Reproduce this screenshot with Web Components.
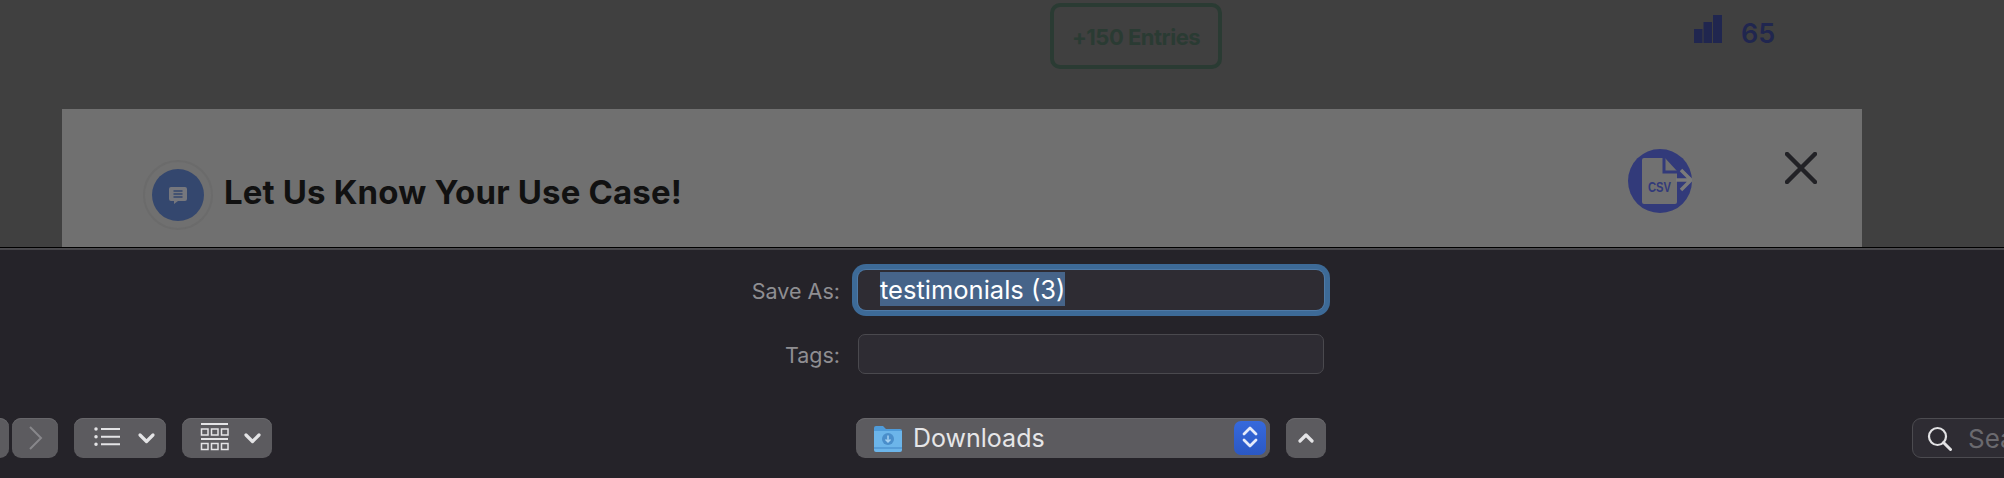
<!DOCTYPE html>
<html>
<head>
<meta charset="utf-8">
<title>Save dialog</title>
<style>
  html, body { margin: 0; padding: 0; height: 478px; overflow: hidden; background: #252329; }
</style>
</head>
<body>
<app-screen>
  <site-backdrop slot="top"></site-backdrop>
  <save-sheet slot="bottom"></save-sheet>
</app-screen>

<script>
const screenTemplate = document.createElement('template');
screenTemplate.innerHTML = `
  <style>
    :host { display: grid; grid-template-rows: 247px 231px; width: 2004px; height: 478px; overflow: hidden; }
  </style>
  <slot name="top"></slot>
  <slot name="bottom"></slot>
`;

class AppScreen extends HTMLElement {
  connectedCallback() {
    this.attachShadow({ mode: 'open' }).appendChild(screenTemplate.content.cloneNode(true));
  }
}

const backdropTemplate = document.createElement('template');
backdropTemplate.innerHTML = `
  <style>
    :host { display: block; background: #404040; overflow: hidden; font-family: Inter, "Liberation Sans", sans-serif; }
    .stats { display: flex; height: 109px; box-sizing: border-box; padding: 3px 0 0 1050px; }
    .entries {
      box-sizing: border-box; width: 172px; height: 66px; padding-top: 2px; border: 4px solid #2a3b33; border-radius: 10px;
      display: flex; align-items: center; justify-content: center;
      color: #2a3b33; font-size: 22px; font-weight: 700; letter-spacing: -0.5px;
    }
    .views { display: flex; align-items: flex-start; gap: 19px; margin: 12px 0 0 472px; height: 31px; color: #20264f; font-size: 27px; font-weight: 600; line-height: 28px; }
    .views svg { display: block; }
    .views span { margin-top: 5px; }
    use-case-card { margin-left: 62px; }
  </style>
  <div class="stats">
    <div class="entries">+150 Entries</div>
    <div class="views">
      <svg width="28" height="28" viewBox="0 0 28 28" fill="#20264f"><rect x="0" y="14" width="8.500" height="14"/><rect x="9.500" y="7" width="8.500" height="21"/><rect x="19" y="0" width="9" height="28"/></svg>
      <span>65</span>
    </div>
  </div>
  <use-case-card></use-case-card>
`;

class SiteBackdrop extends HTMLElement {
  connectedCallback() {
    this.attachShadow({ mode: 'open' }).appendChild(backdropTemplate.content.cloneNode(true));
  }
}

const cardTemplate = document.createElement('template');
cardTemplate.innerHTML = `
  <style>
    :host { display: block; width: 1800px; height: 138px; background: #707070; font-family: Inter, "Liberation Sans", sans-serif; }
    .row { display: flex; align-items: flex-start; height: 100%; box-sizing: border-box; padding: 40px 45px 0 81px; }
    .badge { width: 70px; height: 70px; margin-top: 11px; flex: none; display: flex; align-items: center; justify-content: center; border-radius: 50%; border: 2px solid #6b6b6b; box-sizing: border-box; }
    .dot { width: 52px; height: 52px; border-radius: 50%; background: #34476e; display: flex; align-items: center; justify-content: center; }
    h2 { margin: 8px 0 0 11px; font-size: 33px; line-height: 70px; font-weight: 700; letter-spacing: 0.15px; color: #111; white-space: nowrap; }
    .csv { margin-left: auto; flex: none; }
    .close { margin: 3px 0 0 93px; flex: none; }
  </style>
  <div class="row">
    <div class="badge"><div class="dot">
      <svg width="18" height="17" viewBox="0 0 18 17"><path d="M2 0h14a2 2 0 0 1 2 2v10a2 2 0 0 1-2 2H9l-4 3v-3H2a2 2 0 0 1-2-2V2a2 2 0 0 1 2-2z" fill="#76777d"/><path d="M4.500 4h9M4.500 7h9M4.500 10h9" stroke="#34476e" stroke-width="1.500"/></svg>
    </div></div>
    <h2>Let Us Know Your Use Case!</h2>
    <svg class="csv" width="64" height="64" viewBox="0 0 64 64">
      <circle cx="32" cy="32" r="32" fill="#323a7a"/>
      <path d="M16 9h21l12 13v31a2 2 0 0 1-2 2H16a2 2 0 0 1-2-2V11a2 2 0 0 1 2-2z" fill="#717171"/>
      <path d="M36 9v14h14" fill="none" stroke="#323a7a" stroke-width="3"/>
      <path d="M49 24h6v14h-6z" fill="#323a7a"/>
      <path d="M48 31h14M53 21l10 10-10 10" fill="none" stroke="#7a7a7a" stroke-width="3.500"/>
      <text x="31.500" y="43" font-family="Liberation Sans, sans-serif" font-size="15" font-weight="700" fill="#323a7a" text-anchor="middle" textLength="23" lengthAdjust="spacingAndGlyphs">CSV</text>
    </svg>
    <svg class="close" width="32" height="32" viewBox="0 0 32 32"><path d="M2 2l28 28M30 2L2 30" stroke="#222226" stroke-width="4.500" stroke-linecap="round"/></svg>
  </div>
`;

class UseCaseCard extends HTMLElement {
  connectedCallback() {
    this.attachShadow({ mode: 'open' }).appendChild(cardTemplate.content.cloneNode(true));
  }
}

const sheetTemplate = document.createElement('template');
sheetTemplate.innerHTML = `
  <style>
    :host {
      display: block; box-sizing: border-box; height: 231px; overflow: hidden;
      background: #252329; border-top: 1px solid #000; box-shadow: inset 0 1px 0 #4b4a4e, inset 0 2px 0 #47464a;
      font-family: Inter, "Liberation Sans", sans-serif;
    }
    .form { display: grid; grid-template-columns: 840px 466px; column-gap: 18px; row-gap: 24px; padding-top: 22px; }
    label { color: #8f8e92; font-size: 21.500px; text-align: right; line-height: 42px; height: 40px; }
    .toolbar { display: flex; align-items: flex-start; margin-top: 44px; margin-left: -46px; width: 2100px; }
    .nav { display: flex; gap: 3px; }
    .group { display: flex; gap: 16px; margin-left: 16px; }
    location-popup { margin-left: 584px; }
    .up { margin-left: 16px; }
    search-box { margin-left: 586px; }
  </style>
  <div class="form">
    <label>Save As:</label>
    <name-field focused>testimonials (3)</name-field>
    <label>Tags:</label>
    <name-field></name-field>
  </div>
  <div class="toolbar">
    <div class="nav">
      <tool-button style="--w:55px"></tool-button>
      <tool-button style="--w:46px">
        <svg width="16" height="24" viewBox="0 0 16 24"><path d="M3 1l11 11L3 23" fill="none" stroke="#88878b" stroke-width="2"/></svg>
      </tool-button>
    </div>
    <div class="group">
      <tool-button style="--w:92px">
        <svg width="92" height="40" viewBox="0 0 92 40" fill="none" stroke="#e4e4e6" stroke-width="2">
          <path d="M27 11h19M27 18.700h19M27 26.300h19"/>
          <path d="M22 11h.01M22 18.700h.01M22 26.300h.01" stroke-width="3.500" stroke-linecap="round"/>
          <path d="M66 17l6.500 6.500L79 17" stroke-width="3.200" stroke-linecap="round" stroke-linejoin="round"/>
        </svg>
      </tool-button>
      <tool-button style="--w:90px">
        <svg width="90" height="40" viewBox="0 0 90 40" fill="none" stroke="#e4e4e6" stroke-width="1.500">
          <path d="M19 6h27M19 21h27" stroke-width="1.800"/>
          <rect x="19.500" y="11" width="6.500" height="6"/><rect x="29.500" y="11" width="6.500" height="6"/><rect x="39.500" y="11" width="6.500" height="6"/>
          <rect x="19.500" y="25.500" width="6.500" height="6"/><rect x="29.500" y="25.500" width="6.500" height="6"/><rect x="39.500" y="25.500" width="6.500" height="6"/>
          <path d="M64 17l6.500 6.500L77 17" stroke-width="3.200" stroke-linecap="round" stroke-linejoin="round"/>
        </svg>
      </tool-button>
    </div>
    <location-popup>Downloads</location-popup>
    <tool-button class="up" style="--w:40px">
      <svg width="16" height="10" viewBox="0 0 16 10"><path d="M2 8l6-6 6 6" fill="none" stroke="#e4e4e6" stroke-width="3.200" stroke-linecap="round" stroke-linejoin="round"/></svg>
    </tool-button>
    <search-box></search-box>
  </div>
`;

class SaveSheet extends HTMLElement {
  connectedCallback() {
    this.attachShadow({ mode: 'open' }).appendChild(sheetTemplate.content.cloneNode(true));
  }
}

class NameField extends HTMLElement {
  connectedCallback() {
    const focused = this.hasAttribute('focused');
    this.attachShadow({ mode: 'open' }).innerHTML = `
      <style>
        :host { display: block; box-sizing: border-box; height: 40px; background: #2e2c33; border-radius: 7px; color: #fff; font-size: 25.500px; }
        :host([focused]) { box-shadow: 0 0 0 1px #4f7aa6, 0 0 0 6px #3d6a97; border-radius: 8px; }
        :host(:not([focused])) { border: 1px solid #4a494e; }
        .text { display: inline-block; margin: 2px 0 0 22px; height: 34px; line-height: 36px; background: #466489; white-space: nowrap; }
      </style>
      ${focused ? '<span class="text"><slot></slot></span>' : ''}
    `;
  }
}

const toolButtonTemplate = document.createElement('template');
toolButtonTemplate.innerHTML = `
  <style>
    :host { display: flex; align-items: center; justify-content: center; flex: none; width: var(--w); height: 40px; background: #5c5b5f; border-radius: 9px; box-shadow: inset 0 1px 0 #68676b; }
    ::slotted(svg) { display: block; }
  </style>
  <slot></slot>
`;

class ToolButton extends HTMLElement {
  connectedCallback() {
    this.attachShadow({ mode: 'open' }).appendChild(toolButtonTemplate.content.cloneNode(true));
  }
}

const popupTemplate = document.createElement('template');
popupTemplate.innerHTML = `
  <style>
    :host { display: flex; align-items: center; box-sizing: border-box; flex: none; width: 414px; height: 40px; padding: 0 4px 0 18px; background: #5c5b5f; border-radius: 9px; box-shadow: inset 0 1px 0 #68676b; color: #e6e6e8; font-size: 25px; }
    .name { margin-left: 11px; flex: 1; }
    .stepper { width: 32px; height: 34px; border-radius: 7px; background: linear-gradient(#3669dc, #2b58c4); display: flex; align-items: center; justify-content: center; }
    svg { display: block; }
  </style>
  <svg width="28" height="27" viewBox="0 0 28 27">
    <path d="M0 3a2 2 0 0 1 2-2h7l3 3h14a2 2 0 0 1 2 2v5H0z" fill="#4f9bd9"/>
    <path d="M0 6h28v19a2 2 0 0 1-2 2H2a2 2 0 0 1-2-2z" fill="#6cb5ea"/>
    <path d="M0 23h28" stroke="#4f96d2" stroke-width="1.500"/>
    <circle cx="14" cy="14" r="6" fill="#4a8ecb"/>
    <path d="M14 10.500v6M11.500 14.500l2.500 2.500 2.500-2.500" fill="none" stroke="#a5d1f2" stroke-width="1.500"/>
  </svg>
  <span class="name"><slot></slot></span>
  <div class="stepper">
    <svg width="16" height="28" viewBox="0 0 16 28"><path d="M2 10l6-6 6 6M2 16l6 6 6-6" fill="none" stroke="#e6ebfa" stroke-width="2.800" stroke-linecap="round" stroke-linejoin="round"/></svg>
  </div>
`;

class LocationPopup extends HTMLElement {
  connectedCallback() {
    this.attachShadow({ mode: 'open' }).appendChild(popupTemplate.content.cloneNode(true));
  }
}

const searchTemplate = document.createElement('template');
searchTemplate.innerHTML = `
  <style>
    :host { display: flex; align-items: center; box-sizing: border-box; flex: none; width: 200px; height: 40px; padding-left: 14px; background: #2e2c33; border: 1px solid #4c4b50; border-radius: 9px; color: #6a696e; font-size: 26px; }
    span { margin-left: 16px; }
    svg { display: block; }
  </style>
  <svg width="25" height="25" viewBox="0 0 25 25" fill="none" stroke="#e2e2e4"><circle cx="10.500" cy="10.500" r="8.500" stroke-width="2.200"/><path d="M16.500 16.500l7 7" stroke-width="3" stroke-linecap="round"/></svg>
  <span>Sea</span>
`;

class SearchBox extends HTMLElement {
  connectedCallback() {
    this.attachShadow({ mode: 'open' }).appendChild(searchTemplate.content.cloneNode(true));
  }
}

customElements.define('app-screen', AppScreen);
customElements.define('site-backdrop', SiteBackdrop);
customElements.define('use-case-card', UseCaseCard);
customElements.define('save-sheet', SaveSheet);
customElements.define('name-field', NameField);
customElements.define('tool-button', ToolButton);
customElements.define('location-popup', LocationPopup);
customElements.define('search-box', SearchBox);
</script>
</body>
</html>
